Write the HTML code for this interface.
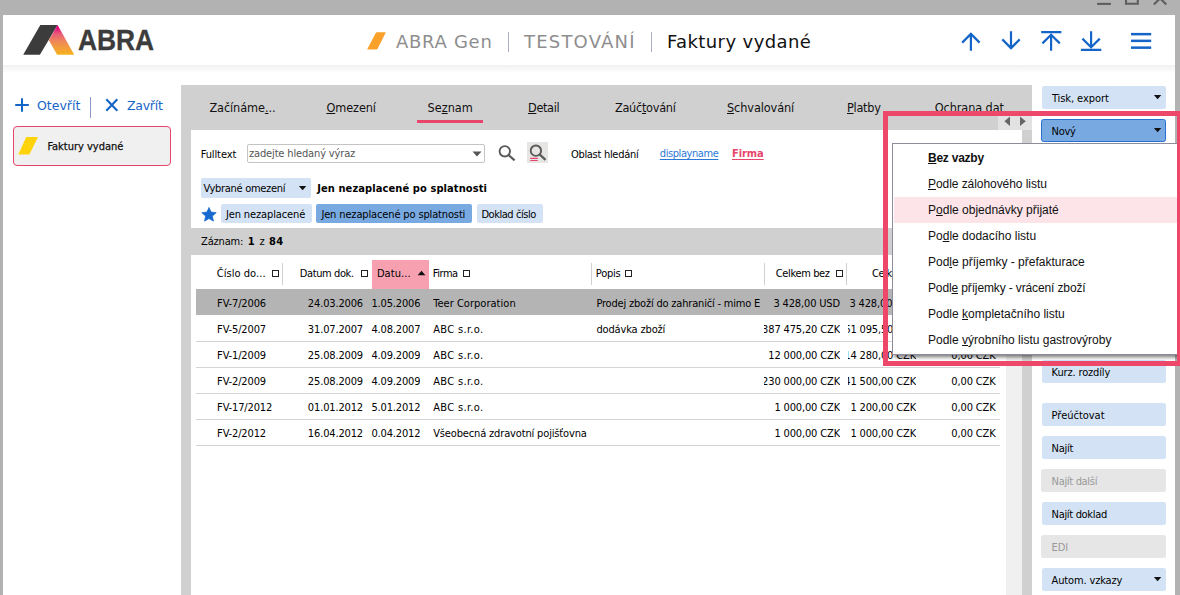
<!DOCTYPE html>
<html lang="cs">
<head>
<meta charset="utf-8">
<title>Faktury vydané</title>
<style>
*{box-sizing:border-box;margin:0;padding:0}
html,body{width:1180px;height:595px;overflow:hidden;background:#b2b2b2}
body{position:relative;font-family:"DejaVu Sans Condensed","DejaVu Sans","Liberation Sans",sans-serif;font-stretch:condensed;font-size:11px;color:#000;letter-spacing:-0.15px}
.abs{position:absolute}
.t{position:absolute;white-space:nowrap;line-height:14px;height:14px;margin-top:1px}
#win{position:absolute;left:3px;top:15px;width:1172px;height:580px;background:#fff}
#hshadow{position:absolute;left:3px;top:65px;width:1172px;height:8px;background:linear-gradient(#f1f1f1,#fff)}
.v{font-family:"DejaVu Sans","Liberation Sans",sans-serif;letter-spacing:0;font-stretch:normal}
.ls{font-family:"Liberation Sans",sans-serif;letter-spacing:0;font-stretch:normal}
#panel{position:absolute;left:181px;top:85px;width:851px;height:510px;background:#d0d0d0}
.btn{position:absolute;background:#d3e3f5;border-radius:2.5px;height:23px;left:1042px;width:124px}
.btn span{position:absolute;left:9.6px;top:6px;line-height:14px;white-space:nowrap}
.btn.dis{background:#e6e6e6;color:#989898;left:1041px;width:125px}
.btn.dis span{left:10.6px}
.chip{position:absolute;background:#d3e3f5;border-radius:2px;height:19px}
.tab{position:absolute;top:100px;font-size:12.6px;line-height:16px;white-space:nowrap;color:#111}
u{text-decoration:underline;text-underline-offset:1px;text-decoration-skip-ink:none}
.row{position:absolute;left:196px;width:804px;height:26px;border-bottom:1px solid #d4d4d4}
.c{position:absolute;top:7px;line-height:14px;white-space:nowrap}
.mi{position:absolute;left:35px;letter-spacing:0;font-stretch:normal;font-family:"Liberation Sans",sans-serif;font-size:12px;line-height:16px;white-space:nowrap;color:#111}

.hc{position:absolute;top:267px;line-height:14px;white-space:nowrap}
.hs{position:absolute;top:263px;width:1px;height:22px;background:#d0d0d0}
.sq{position:absolute;top:270px;width:7px;height:7px;border:1px solid #222}
.row.sel{background:#b4b4b4;border-bottom:0;height:26.4px}
.row.sel .c{top:8px}
.c.r{display:flex;justify-content:flex-end;overflow:hidden}
.c.l{overflow:hidden}
#zaz b{letter-spacing:0.35px}
</style>
</head>
<body>
<div id="win"></div>
<div id="hshadow"></div>

<!-- window controls -->
<svg class="abs" style="left:1090px;top:0" width="90" height="15" viewBox="0 0 90 15">
<g stroke="#5e5e5e" stroke-width="2.1" fill="none">
<line x1="7.1" y1="3.9" x2="20.9" y2="3.9"/>
<polyline points="36,0 36,3.8 47.8,3.8 47.8,0"/>
<polyline points="63.9,4.4 70.1,-1.6 76.3,4.4"/>
</g>
</svg>

<!-- logo -->
<svg class="abs" style="left:20px;top:22px" width="60" height="36" viewBox="0 0 60 36">
<defs><linearGradient id="lg" x1="0" y1="0" x2="0" y2="1"><stop offset="0" stop-color="#e5007e"/><stop offset="0.08" stop-color="#e5007e"/><stop offset="0.3" stop-color="#e95c79"/><stop offset="0.55" stop-color="#ee8759"/><stop offset="0.8" stop-color="#f3a038"/><stop offset="1" stop-color="#f8b31a"/></linearGradient></defs>
<polygon points="20.3,2.9 37.6,2.9 19.9,32.8 3.2,32.8" fill="#3c3c3c"/>
<polygon points="37.6,2.9 54.2,32.8 37.1,32.8 28.9,18.3" fill="url(#lg)"/>
</svg>
<div class="t ls" style="left:77.8px;top:22.6px;font-size:29.3px;line-height:32px;height:32px;font-weight:bold;color:#3c3c3c;-webkit-text-stroke:0.3px #3c3c3c;transform:scaleX(0.9);transform-origin:0 0" id="logo">ABRA</div>

<!-- title -->
<svg class="abs" style="left:365px;top:32px" width="24" height="20" viewBox="0 0 24 20"><path d="M10.6,1.2 Q11.1,0.3 12,0.3 L20.9,0.3 L12.7,16.6 Q12.2,17.5 11.3,17.5 L2.1,17.5 Z" fill="#f9a12b"/></svg>
<div class="t v" id="t1" style="left:396px;top:29.6px;font-size:18px;line-height:22px;height:22px;color:#8e8e8e;letter-spacing:0.7px">ABRA Gen</div>
<div class="abs" style="left:508px;top:32px;width:1px;height:20px;background:#a8acc4"></div>
<div class="t v" id="t2" style="left:524px;top:29.6px;font-size:18px;line-height:22px;height:22px;color:#8e8e8e;letter-spacing:1.2px">TESTOVÁNÍ</div>
<div class="abs" style="left:651px;top:32px;width:1px;height:20px;background:#a8acc4"></div>
<div class="t v" id="t3" style="left:667px;top:29.6px;font-size:18px;line-height:22px;height:22px;color:#111;letter-spacing:0.4px">Faktury vydané</div>

<!-- nav icons -->
<svg class="abs" style="left:955px;top:26px" width="205" height="30" viewBox="0 0 205 30">
<g stroke="#1565c8" stroke-width="2.2" fill="none">
<path d="M15.9,24.8V7.6M7.2,16.6L15.9,7.9L24.6,16.6"/>
<path d="M56,5.2V22.4M47.3,13.4L56,22.1L64.7,13.4"/>
<path d="M86.2,6.1H106.4M96.1,24.8V8.4M87.4,17.4L96.1,8.7L104.8,17.4"/>
<path d="M125.9,23.9H146.3M136.1,5.2V21.6M127.4,12.6L136.1,21.3L144.8,12.6"/>
</g>
<g fill="#1565c8"><rect x="176" y="6.9" width="20.2" height="2.5"/><rect x="176" y="13.6" width="20.2" height="2.5"/><rect x="176" y="20.4" width="20.2" height="2.5"/></g>
</svg>

<!-- left panel -->
<svg class="abs" style="left:14px;top:97px" width="16" height="16" viewBox="0 0 16 16"><path d="M8,1.2V14.8M1.2,8H14.8" stroke="#1565c8" stroke-width="2" fill="none"/></svg>
<div class="t v" style="left:37px;top:97px;font-size:12.5px;line-height:16px;height:16px;color:#1565c8">Otevřít</div>
<div class="abs" style="left:90px;top:97px;width:1px;height:21px;background:#8c98c8"></div>
<svg class="abs" style="left:104px;top:97px" width="16" height="16" viewBox="0 0 16 16"><path d="M2.3,2.3L13.3,13.7M13.3,2.3L2.3,13.7" stroke="#1565c8" stroke-width="2.1" fill="none"/></svg>
<div class="t v" style="left:127px;top:97px;font-size:12.5px;line-height:16px;height:16px;color:#1565c8;letter-spacing:-0.25px">Zavřít</div>

<div class="abs" style="left:13px;top:126px;width:158px;height:40px;border:1px solid #e8456b;border-radius:4px;background:#f0f0f0"></div>
<svg class="abs" style="left:17px;top:136px" width="24" height="20" viewBox="0 0 24 20"><path d="M9.2,1 L21,1 L12.4,18.6 L1.3,18.6 Z" fill="#ffd30b"/></svg>
<div class="t" id="fv" style="left:47.4px;top:139px;color:#111;-webkit-text-stroke:0.25px #111;letter-spacing:-0.01px">Faktury vydané</div>

<!-- main panel -->
<div id="panel"></div>
<div class="tab" id="tb1" style="left:209.4px;letter-spacing:-0.09px">Začínáme<u>.</u>..</div>
<div class="tab" id="tb2" style="left:326.4px;letter-spacing:-0.10px"><u>O</u>mezení</div>
<div class="tab" id="tb3" style="left:427.6px;letter-spacing:-0.02px">Se<u>z</u>nam</div>
<div class="abs" style="left:417px;top:120px;width:66px;height:3px;background:#e8456b"></div>
<div class="tab" id="tb4" style="left:528px;letter-spacing:-0.34px"><u>D</u>etail</div>
<div class="tab" id="tb5" style="left:614.9px;letter-spacing:-0.27px">Zaúč<u>t</u>ování</div>
<div class="tab" id="tb6" style="left:727px;letter-spacing:-0.11px"><u>S</u>chvalování</div>
<div class="tab" id="tb7" style="left:847px;letter-spacing:-0.28px"><u>P</u>latby</div>
<div class="tab" id="tb8" style="left:934.8px;letter-spacing:-0.11px">Ochrana dat</div>
<div class="abs" style="left:998px;top:111px;width:34px;height:19px;background:#e2e2e2"></div>
<svg class="abs" style="left:1002px;top:115px" width="28" height="12" viewBox="0 0 28 12"><path d="M8,1.5V11L2.4,6.3Z M18,1.5V11L23.8,6.3Z" fill="#666"/></svg>

<!-- filter area -->
<div class="abs" style="left:191px;top:130px;width:831px;height:98px;background:#fff"></div>
<div class="t" id="ft" style="left:200.7px;top:147px;letter-spacing:-0.11px">Fulltext</div>
<div class="abs" style="left:247px;top:144px;width:238px;height:19px;border:1px solid #c4c4c4;border-radius:2px;background:#fff"></div>
<div class="t" id="ph" style="left:249px;top:146px;color:#555;letter-spacing:-0.15px">zadejte hledaný výraz</div>
<svg class="abs" style="left:471px;top:150px" width="12" height="8" viewBox="0 0 12 8"><path d="M1.5,1.5H10.5L6,6.5Z" fill="#555"/></svg>
<svg class="abs" style="left:497px;top:143px" width="22" height="22" viewBox="0 0 22 22"><circle cx="7.8" cy="8.3" r="5.2" stroke="#5a5a5a" stroke-width="1.9" fill="none"/><path d="M11.5,12L17.6,17.3" stroke="#5a5a5a" stroke-width="2.2" /></svg>
<div class="abs" style="left:527px;top:142px;width:21px;height:21px;background:#e6e5e3"></div>
<svg class="abs" style="left:527px;top:142px" width="22" height="22" viewBox="0 0 22 22"><circle cx="8.9" cy="8.7" r="5.2" stroke="#5a5a5a" stroke-width="1.9" fill="none"/><path d="M12.6,12.4L18.5,17.9" stroke="#5a5a5a" stroke-width="2.2" /><path d="M3.2,16.4H10.8M3.2,18.5H10.8" stroke="#e8456b" stroke-width="1.2"/></svg>
<div class="t" id="ob" style="left:570.9px;top:147px;letter-spacing:-0.29px">Oblast hledání</div>
<div class="t" id="dn" style="left:659.8px;top:146px;color:#2a78d8;text-decoration:underline;text-decoration-skip-ink:none;text-underline-offset:1.5px;letter-spacing:-0.42px">displayname</div>
<div class="t" id="fi" style="left:732px;top:146px;color:#e8456b;text-decoration:underline;text-decoration-skip-ink:none;text-underline-offset:1.5px;font-weight:bold;letter-spacing:-0.06px">Firma</div>

<div class="chip" style="left:201px;top:178px;width:110px;height:20px"></div>
<div class="t" id="vo" style="left:203.4px;top:181px;letter-spacing:-0.31px">Vybrané omezení</div>
<svg class="abs" style="left:298.2px;top:185.3px" width="10" height="7" viewBox="0 0 10 7"><path d="M0.9,1H8.3L4.6,5.3Z" fill="#111"/></svg>
<div class="t" id="jb" style="left:317.2px;top:181px;font-weight:bold;letter-spacing:0.10px">Jen nezaplacené po splatnosti</div>

<svg class="abs" style="left:199.8px;top:205.7px" width="18" height="18" viewBox="0 0 18 18"><polygon points="9.00,1.40 11.12,6.09 16.23,6.65 12.42,10.11 13.47,15.15 9.00,12.60 4.53,15.15 5.58,10.11 1.77,6.65 6.88,6.09" fill="#1769cf" stroke="#1769cf" stroke-width="0.7" stroke-linejoin="round"/></svg>
<div class="chip" style="left:221px;top:204px;width:91px"></div>
<div class="t" id="c1" style="left:225.9px;top:207px;letter-spacing:-0.12px">Jen nezaplacené</div>
<div class="chip" style="left:316px;top:204px;width:156px;background:#78a9e0"></div>
<div class="t" id="c2" style="left:321.4px;top:207px;letter-spacing:-0.14px">Jen nezaplacené po splatnosti</div>
<div class="chip" style="left:477px;top:204px;width:66px"></div>
<div class="t" id="c3" style="left:481.4px;top:207px;letter-spacing:-0.45px">Doklad číslo</div>

<div class="t" id="zaz" style="left:201px;top:234px;word-spacing:1.5px">Záznam: <b>1</b> z <b>84</b></div>

<!-- grid -->
<div class="abs" style="left:191px;top:255px;width:815px;height:340px;background:#fff"></div>
<div class="abs" style="left:1006px;top:255px;width:16px;height:340px;background:#f0f0f0"></div>
<div class="abs" style="left:372px;top:260px;width:57px;height:29px;background:#f7a1b0"></div>
<div id="hdr">
<div class="hc" id="h1" style="left:216.7px;letter-spacing:0.05px">Číslo do...</div><i class="sq" style="left:272px"></i>
<div class="hs" style="left:282px"></div>
<div class="hc" id="h2" style="left:299.8px;letter-spacing:-0.40px">Datum dok.</div><i class="sq" style="left:361px"></i>
<div class="hc" id="h3" style="left:376.9px;letter-spacing:0.09px">Datu...</div><svg class="abs" style="left:417px;top:270px" width="9" height="6" viewBox="0 0 9 6"><path d="M0.6,5.2H8.4L4.5,0.8Z" fill="#111"/></svg>
<div class="hc" id="h4" style="left:432.8px;letter-spacing:-0.46px">Firma</div><i class="sq" style="left:463px"></i>
<div class="hs" style="left:591px"></div>
<div class="hc" id="h5" style="left:595.8px;letter-spacing:-0.23px">Popis</div><i class="sq" style="left:625px"></i>
<div class="hs" style="left:764px"></div>
<div class="hc" id="h6" style="left:775.8px;letter-spacing:-0.37px">Celkem bez</div><i class="sq" style="left:836px"></i>
<div class="hs" style="left:846px"></div>
<div class="hc" id="h7" style="left:871.9px;letter-spacing:-0.37px">Celkem</div>
</div><!--/hdr-->
<div id="rows">
<div class="row sel" style="top:289px"><span class="c" style="left:21.1px">FV-7/2006</span><span class="c r" style="left:100px;width:67px">24.03.2006</span><span class="c r" style="left:175.4px;width:49px">01.05.2006</span><span class="c" style="left:237.2px;letter-spacing:0.03px">Teer Corporation</span><span class="c l" style="left:400.4px;width:163.6px;letter-spacing:-0.19px">Prodej zboží do zahraničí - mimo EU</span><span class="c r" style="left:568.4px;width:75.6px">3 428,00 USD</span><span class="c r" style="left:652px;width:68px">3 428,00 USD</span><span class="c r" style="left:729.5px;width:70px">0,00 USD</span></div>
<div class="row" style="top:316px"><span class="c" style="left:21.1px">FV-5/2007</span><span class="c r" style="left:100px;width:67px">31.07.2007</span><span class="c r" style="left:175.4px;width:49px">14.08.2007</span><span class="c" style="left:237.2px;letter-spacing:0.33px">ABC s.r.o.</span><span class="c l" style="left:400.4px;width:163.6px">dodávka zboží</span><span class="c r" style="left:568.4px;width:75.6px">387 475,20 CZK</span><span class="c r" style="left:652px;width:68px">461 095,50 CZK</span><span class="c r" style="left:729.5px;width:70px">0,00 CZK</span></div>
<div class="row" style="top:342px"><span class="c" style="left:21.1px">FV-1/2009</span><span class="c r" style="left:100px;width:67px">25.08.2009</span><span class="c r" style="left:175.4px;width:49px">24.09.2009</span><span class="c" style="left:237.2px;letter-spacing:0.33px">ABC s.r.o.</span><span class="c l" style="left:400.4px;width:163.6px"></span><span class="c r" style="left:568.4px;width:75.6px">12 000,00 CZK</span><span class="c r" style="left:652px;width:68px">14 280,00 CZK</span><span class="c r" style="left:729.5px;width:70px">0,00 CZK</span></div>
<div class="row" style="top:368px"><span class="c" style="left:21.1px">FV-2/2009</span><span class="c r" style="left:100px;width:67px">25.08.2009</span><span class="c r" style="left:175.4px;width:49px">24.09.2009</span><span class="c" style="left:237.2px;letter-spacing:0.33px">ABC s.r.o.</span><span class="c l" style="left:400.4px;width:163.6px"></span><span class="c r" style="left:568.4px;width:75.6px">230 000,00 CZK</span><span class="c r" style="left:652px;width:68px">241 500,00 CZK</span><span class="c r" style="left:729.5px;width:70px">0,00 CZK</span></div>
<div class="row" style="top:394px"><span class="c" style="left:21.1px">FV-17/2012</span><span class="c r" style="left:100px;width:67px">01.01.2012</span><span class="c r" style="left:175.4px;width:49px">15.01.2012</span><span class="c" style="left:237.2px;letter-spacing:0.33px">ABC s.r.o.</span><span class="c l" style="left:400.4px;width:163.6px"></span><span class="c r" style="left:568.4px;width:75.6px">1 000,00 CZK</span><span class="c r" style="left:652px;width:68px">1 200,00 CZK</span><span class="c r" style="left:729.5px;width:70px">0,00 CZK</span></div>
<div class="row" style="top:420px"><span class="c" style="left:21.1px">FV-2/2012</span><span class="c r" style="left:100px;width:67px">16.04.2012</span><span class="c r" style="left:175.4px;width:49px">30.04.2012</span><span class="c" style="left:237.2px">Všeobecná zdravotní pojišťovna</span><span class="c l" style="left:400.4px;width:163.6px"></span><span class="c r" style="left:568.4px;width:75.6px">1 000,00 CZK</span><span class="c r" style="left:652px;width:68px">1 000,00 CZK</span><span class="c r" style="left:729.5px;width:70px">0,00 CZK</span></div>
</div><!--/rows-->

<!-- right panel -->
<div class="abs" style="left:1032px;top:85px;width:143px;height:510px;background:#fff"></div>
<div class="btn" style="top:86px"><span id="b1" style="left:9.9px;letter-spacing:-0.07px">Tisk, export</span></div>
<div class="btn" style="top:119px;left:1041px;width:125px;background:#78a9e0;border:1px solid #2a70d0"><span id="b2" style="left:9.6px;top:5px;letter-spacing:-0.3px">Nový</span></div>
<div class="btn" style="top:360px"><span id="b3">Kurz. rozdíly</span></div>
<div class="btn" style="top:403px"><span id="b4" style="letter-spacing:-0.02px">Přeúčtovat</span></div>
<div class="btn" style="top:436px"><span id="b5" style="letter-spacing:-0.29px">Najít</span></div>
<div class="btn dis" style="top:469px"><span id="b6" style="letter-spacing:-0.32px">Najít další</span></div>
<div class="btn" style="top:502px"><span id="b7" style="letter-spacing:-0.32px">Najít doklad</span></div>
<div class="btn dis" style="top:535px"><span id="b8">EDI</span></div>
<div class="btn" style="top:568px"><span id="b9">Autom. vzkazy</span></div>
<svg class="abs" style="left:1153px;top:94px" width="10" height="7" viewBox="0 0 10 7"><path d="M0.9,1H8.3L4.6,5.3Z" fill="#111"/></svg>
<svg class="abs" style="left:1153px;top:127px" width="10" height="7" viewBox="0 0 10 7"><path d="M0.9,1H8.3L4.6,5.3Z" fill="#111"/></svg>
<svg class="abs" style="left:1153px;top:576px" width="10" height="7" viewBox="0 0 10 7"><path d="M0.9,1H8.3L4.6,5.3Z" fill="#111"/></svg>

<!-- menu -->
<div id="menu" class="abs" style="left:892px;top:143px;width:286px;height:212px;background:#fff;border:1px solid #8c8c9c;box-shadow:2px 2px 4px rgba(0,0,0,.55);clip-path:inset(0 -10px -10px 0)">
<div class="abs" style="left:1px;top:53px;width:284px;height:26px;background:#fce4e8"></div>
<div class="mi" id="m1" style="letter-spacing:-0.24px;top:6px;font-weight:bold"><u>B</u>ez vazby</div>
<div class="mi" id="m2" style="letter-spacing:-0.06px;top:32px"><u>P</u>odle zálohového listu</div>
<div class="mi" id="m3" style="top:58px">P<u>o</u>dle objednávky přijaté</div>
<div class="mi" id="m4" style="top:84px">Po<u>d</u>le dodacího listu</div>
<div class="mi" id="m5" style="top:110px">Pod<u>l</u>e příjemky - přefakturace</div>
<div class="mi" id="m6" style="letter-spacing:-0.13px;top:136px">Podl<u>e</u> příjemky - vrácení zboží</div>
<div class="mi" id="m7" style="top:162px">Podle <u>k</u>ompletačního listu</div>
<div class="mi" id="m8" style="top:188px">Podle <u>v</u>ýrobního listu gastrovýroby</div>
</div>

<!-- red highlight -->
<div class="abs" style="left:883px;top:111px;width:299px;height:255px;border:5px solid #ed486a"></div>
</body>
</html>
